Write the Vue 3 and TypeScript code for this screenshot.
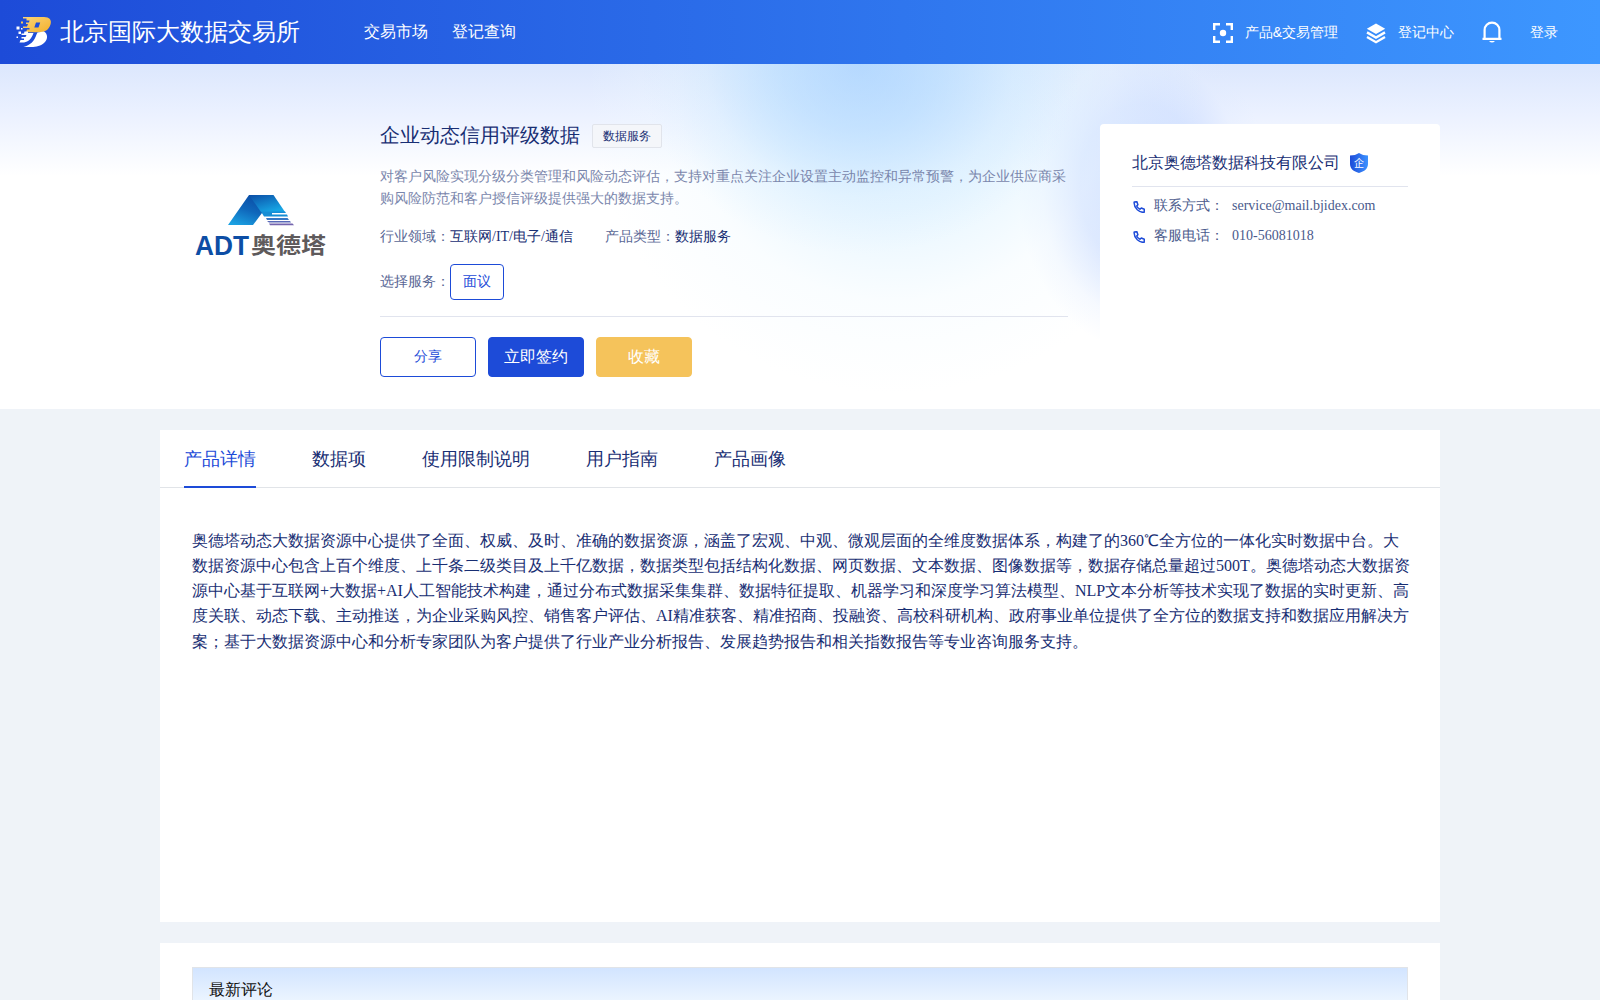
<script setup lang="ts">
import { ref } from 'vue'

interface Contact {
  label: string
  value: string
}

const navItems: string[] = ['交易市场', '登记查询']
const tabs: string[] = ['产品详情', '数据项', '使用限制说明', '用户指南', '产品画像']
const activeTab = ref<number>(0)
const contacts: Contact[] = [
  { label: '联系方式：', value: 'service@mail.bjidex.com' },
  { label: '客服电话：', value: '010-56081018' },
]
</script>

<template>
  <div class="page">
    <header class="header">
      <svg class="brand-icon" viewBox="0 0 36 32" width="36" height="32">
        <defs>
          <linearGradient id="gold" x1="0" y1="0" x2="1" y2="1">
            <stop offset="0" stop-color="#fbd478" />
            <stop offset="1" stop-color="#f3b02c" />
          </linearGradient>
        </defs>
        <path
          fill="url(#gold)" fill-rule="evenodd"
          d="M7 1H28C33.500 1 36 4 34.500 8.500C33 13.500 29 16.200 24 16.200H10L11 13.500H13.500V12H7V10.500H11L12 8H10V6.500H13L13.500 4.500H10.500V2.500H7ZM20 6.500L18.300 11.500H22.500L24.200 6.500Z"
        />
        <path
          fill="#fff"
          d="M28 15.500C32 18 32 23 28.500 26.500C25 30 20 31 15.500 31H7.500C14 29.500 18.500 25 20.500 18.500L21.500 16.500ZM8.500 15.500H12V17H17.500L16.500 19.500C14.500 24 11 26.500 6.500 26.500H3.500L4.500 24H8V22.500H5.500V21H9.500L10.500 19H5.500V17.500H8Z"
        />
        <path fill="#fff" d="M0.500 10.500h3v3h-3zM2.500 15.500h2.500v2.500H2.500zM0.500 20.500h1.500V22H0.500zM5 12h1.500v1.500H5z" />
        <path fill="#f8c653" d="M5 5.500h2v2H5z" />
      </svg>
      <span class="brand">北京国际大数据交易所</span>
      <nav class="nav">
        <a v-for="item in navItems" :key="item">{{ item }}</a>
      </nav>
      <div class="tools">
        <svg class="scan" viewBox="0 0 20 20" width="20" height="20">
          <path d="M1.200 7V1.200H7M13 1.200H18.800V7M18.800 13V18.800H13M7 18.800H1.200V13" fill="none" stroke="#fff" stroke-width="2.400" />
          <circle cx="10" cy="10" r="3.200" fill="#fff" />
        </svg>
        <span class="t1">产品&amp;交易管理</span>
        <svg class="layers" viewBox="0 0 20 21" width="20" height="21">
          <path d="M10 0.500L19.200 5.800L10 11L0.800 5.800Z" fill="#fff" />
          <path d="M1 9.400L10 14.600L19 9.400M1 14L10 19.200L19 14" fill="none" stroke="#fff" stroke-width="2.400" />
        </svg>
        <span class="t2">登记中心</span>
        <svg class="bell" viewBox="0 0 20 22" width="20" height="22">
          <path d="M2.600 17.500V9a7.400 7.400 0 0 1 14.800 0V17.500M0.500 17.800H19.500" fill="none" stroke="#fff" stroke-width="2.200" />
          <path d="M7 20H13Q10 23.200 7 20Z" fill="#fff" />
        </svg>
        <span>登录</span>
      </div>
    </header>

    <section class="hero">
      <div class="hero-inner">
        <div class="logo">
          <svg viewBox="0 0 180 200" width="180" height="200">
            <defs>
              <linearGradient id="roofL" x1="0.700" y1="0" x2="0.200" y2="1">
                <stop offset="0" stop-color="#0a4aa3" />
                <stop offset="0.500" stop-color="#0f67bb" />
                <stop offset="1" stop-color="#1ba1e2" />
              </linearGradient>
              <linearGradient id="roofR" x1="0" y1="0" x2="0.600" y2="1">
                <stop offset="0" stop-color="#0b4da6" />
                <stop offset="1" stop-color="#17a5e4" />
              </linearGradient>
            </defs>
            <path d="M69 71L48 101H73L82 89L91 78L89 71Z" fill="url(#roofL)" />
            <path d="M69 71H93.500L105 88H81Z" fill="url(#roofR)" />
            <path d="M81 87.500H105L106 89H92V90.500H107L108 92.500H84Z" fill="#168ed5" />
            <path d="M86 94H107.500L109 96H87Z" fill="#3478c5" />
            <path d="M87 97H110L111 98.500H89Z" fill="#5868b8" />
            <path d="M89 99.500H112.500L114 101.300H90Z" fill="#7565ae" />
            <text class="adt" x="15" y="131" textLength="54" lengthAdjust="spacingAndGlyphs">ADT</text>
            <text class="adt-cn" x="71" y="129" textLength="75" lengthAdjust="spacingAndGlyphs">奥德塔</text>
          </svg>
        </div>
        <div class="info">
          <div class="title-row">
            <h1>企业动态信用评级数据</h1>
            <span class="tag">数据服务</span>
          </div>
          <p class="desc">对客户风险实现分级分类管理和风险动态评估，支持对重点关注企业设置主动监控和异常预警，为企业供应商采购风险防范和客户授信评级提供强大的数据支持。</p>
          <div class="meta">
            <span>行业领域：<b>互联网/IT/电子/通信</b></span>
            <span>产品类型：<b>数据服务</b></span>
          </div>
          <div class="service">选择服务：<span class="choice">面议</span></div>
          <div class="actions">
            <button class="share">分享</button>
            <button class="sign">立即签约</button>
            <button class="fav">收藏</button>
          </div>
        </div>
        <aside class="company">
          <div class="company-name">
            <span>北京奥德塔数据科技有限公司</span>
            <svg viewBox="0 0 18 20" width="18" height="20">
              <defs>
                <linearGradient id="shield" x1="0" y1="0" x2="1" y2="0">
                  <stop offset="0" stop-color="#1d4bd8" />
                  <stop offset="1" stop-color="#3c92ff" />
                </linearGradient>
              </defs>
              <path d="M9 0C11.500 1.700 14.500 2.500 18 2.500V11C18 15.500 14.500 18.500 9 20C3.500 18.500 0 15.500 0 11V2.500C3.500 2.500 6.500 1.700 9 0Z" fill="url(#shield)" />
              <text x="9" y="13.600" text-anchor="middle" class="shield-text">企</text>
            </svg>
          </div>
          <div v-for="c in contacts" :key="c.label" class="contact">
            <svg viewBox="0 0 12 12" width="12" height="12">
              <path d="M1.200 0.900L3.900 0.700L4.900 3.700L3.700 5Q4.800 7.200 7 8.200L8.300 7L11.300 8.300L11.200 11.200Q7.600 11.800 4.300 8.800Q0.600 5.200 1.200 0.900Z" fill="none" stroke="#1d4bd8" stroke-width="1.500" stroke-linejoin="round" />
            </svg>
            <span class="contact-label">{{ c.label }}</span>
            <span>{{ c.value }}</span>
          </div>
        </aside>
      </div>
    </section>

    <main class="card detail">
      <div class="tabs">
        <div
          v-for="(tab, i) in tabs" :key="tab"
          class="tab" :class="{ active: i === activeTab }"
          @click="activeTab = i"
        >{{ tab }}</div>
      </div>
      <p class="article">奥德塔动态大数据资源中心提供了全面、权威、及时、准确的数据资源，涵盖了宏观、中观、微观层面的全维度数据体系，构建了的360℃全方位的一体化实时数据中台。大数据资源中心包含上百个维度、上千条二级类目及上千亿数据，数据类型包括结构化数据、网页数据、文本数据、图像数据等，数据存储总量超过500T。奥德塔动态大数据资源中心基于互联网+大数据+AI人工智能技术构建，通过分布式数据采集集群、数据特征提取、机器学习和深度学习算法模型、NLP文本分析等技术实现了数据的实时更新、高度关联、动态下载、主动推送，为企业采购风控、销售客户评估、AI精准获客、精准招商、投融资、高校科研机构、政府事业单位提供了全方位的数据支持和数据应用解决方案；基于大数据资源中心和分析专家团队为客户提供了行业产业分析报告、发展趋势报告和相关指数报告等专业咨询服务支持。</p>
    </main>

    <section class="card comments">
      <div class="comment-box">最新评论</div>
    </section>
  </div>
</template>

<style>
body {
  margin: 0;
  overflow: hidden;
}
</style>

<style scoped>
.page {
  height: 1000px;
  overflow: hidden;
  background: #eff3f8;
  font-family: "Liberation Serif", serif;
  color: #182e73;
}
.header {
  height: 64px;
  box-sizing: border-box;
  padding: 0 42px 0 16px;
  display: flex;
  align-items: center;
  background: linear-gradient(90deg, #1d4bd8, #3d97ff);
  color: #fff;
  font-family: "Liberation Sans", sans-serif;
}
.brand {
  margin-left: 8px;
  font-size: 24px;
}
.nav {
  display: flex;
  gap: 24px;
  margin-left: 64px;
  font-size: 16px;
}
.tools {
  display: flex;
  align-items: center;
  margin-left: auto;
  font-size: 14px;
  line-height: 20px;
}
.scan,
.layers {
  margin: 2px 12px 0 0;
}
.t1,
.t2 {
  margin-right: 28px;
}
.bell {
  margin: 0 28px 1px 0;
}
.hero {
  height: 345px;
  background:
    radial-gradient(ellipse 220px 190px at 860px 0, rgba(160, 205, 255, 0.6), rgba(168, 211, 255, 0.45) 35%, rgba(190, 223, 255, 0.17) 70%, rgba(210, 233, 255, 0) 100%),
    radial-gradient(ellipse 310px 310px at 895px 20px, rgba(208, 234, 255, 0.72), rgba(217, 240, 255, 0.6) 40%, rgba(238, 249, 255, 0.32) 70%, rgba(255, 255, 255, 0) 100%),
    radial-gradient(ellipse 125px 165px at 1142px 122px, rgba(200, 218, 255, 0.9), rgba(205, 221, 255, 0.75) 50%, rgba(225, 235, 255, 0.3) 80%, rgba(255, 255, 255, 0) 100%),
    linear-gradient(180deg, #dce7fd 0, #ebf1ff 50px, #fff 112px);
}
.hero-inner {
  width: 1280px;
  margin: 0 auto;
  padding-top: 60px;
  display: flex;
}
.logo {
  width: 180px;
  height: 200px;
  margin: 0 20px;
}
.adt {
  font: bold 27px "Liberation Sans", sans-serif;
  fill: #0d4ea5;
}
.adt-cn {
  font: bold 22px "Noto Sans CJK SC", sans-serif;
  fill: #5e5a5b;
}
.info {
  width: 688px;
}
.title-row {
  display: flex;
  align-items: center;
  gap: 12px;
  height: 24px;
}
h1 {
  margin: 0 0 2px;
  font-size: 20px;
  font-weight: 400;
}
.tag {
  height: 24px;
  line-height: 22px;
  box-sizing: border-box;
  padding: 0 10px;
  border: 1px solid #e1e4eb;
  border-radius: 2px;
  background: #f4f6fa;
  font-size: 12px;
}
.desc {
  margin: 18px 0 0;
  font-size: 14px;
  line-height: 22px;
  color: #7a86ac;
}
.meta {
  display: flex;
  gap: 32px;
  margin-top: 16px;
  font-size: 14px;
  line-height: 22px;
  color: #596795;
}
.meta b {
  font-weight: 400;
  color: #182e73;
}
.service {
  display: flex;
  align-items: center;
  height: 36px;
  margin-top: 16px;
  padding-bottom: 16px;
  border-bottom: 1px solid #e1e4ee;
  font-size: 14px;
  color: #596795;
}
.choice {
  box-sizing: border-box;
  width: 54px;
  height: 36px;
  line-height: 34px;
  text-align: center;
  border: 1px solid #1d4bd8;
  border-radius: 4px;
  color: #1d4bd8;
}
.actions {
  display: flex;
  gap: 12px;
  margin-top: 20px;
}
.actions button {
  width: 96px;
  height: 40px;
  padding: 0;
  border: 1px solid #1d4bd8;
  border-radius: 4px;
  font-family: inherit;
  font-size: 16px;
}
.actions .share {
  font-size: 14px;
  background: #fff;
  color: #1d4bd8;
}
.actions .sign {
  background: #1d4bd8;
  color: #fff;
}
.actions .fav {
  border-color: #f5c35b;
  background: #f5c35b;
  color: #fff;
}
.company {
  width: 340px;
  height: 254px;
  margin-left: 32px;
  padding: 0 32px;
  box-sizing: border-box;
  border-radius: 4px;
  background: #fff;
}
.company-name {
  display: flex;
  align-items: center;
  gap: 10px;
  height: 46px;
  padding-top: 16px;
  margin-bottom: 9px;
  border-bottom: 1px solid #e1e4ee;
  font-size: 16px;
}
.shield-text {
  font: 10px "Noto Sans CJK SC", sans-serif;
  fill: #fff;
}
.contact {
  display: flex;
  align-items: center;
  height: 20px;
  margin-bottom: 10px;
  font-size: 14px;
  color: #4a5a8c;
}
.contact svg {
  margin: 2px 9px 0 1px;
}
.contact-label {
  margin-right: 8px;
}
.card {
  width: 1280px;
  margin: 21px auto 0;
  background: #fff;
}
.detail {
  height: 492px;
}
.tabs {
  display: flex;
  gap: 56px;
  height: 57px;
  padding: 0 24px;
  border-bottom: 1px solid #e1e4e8;
}
.tab {
  height: 56px;
  line-height: 58px;
  font-size: 18px;
}
.tab.active {
  color: #1d4bd8;
  border-bottom: 2px solid #1d4bd8;
}
.article {
  margin: 40px 28px 0 32px;
  font-size: 16px;
  line-height: 25.14px;
}
.comments {
  height: 200px;
  padding: 24px 32px 0;
  box-sizing: border-box;
}
.comment-box {
  height: 170px;
  padding: 0 16px;
  border: 1px solid #e1e4e8;
  background: linear-gradient(180deg, #d2e4ff, #eef6ff 36px, #fff 60px);
  font-size: 16px;
  line-height: 44px;
  color: #111;
}
</style>
